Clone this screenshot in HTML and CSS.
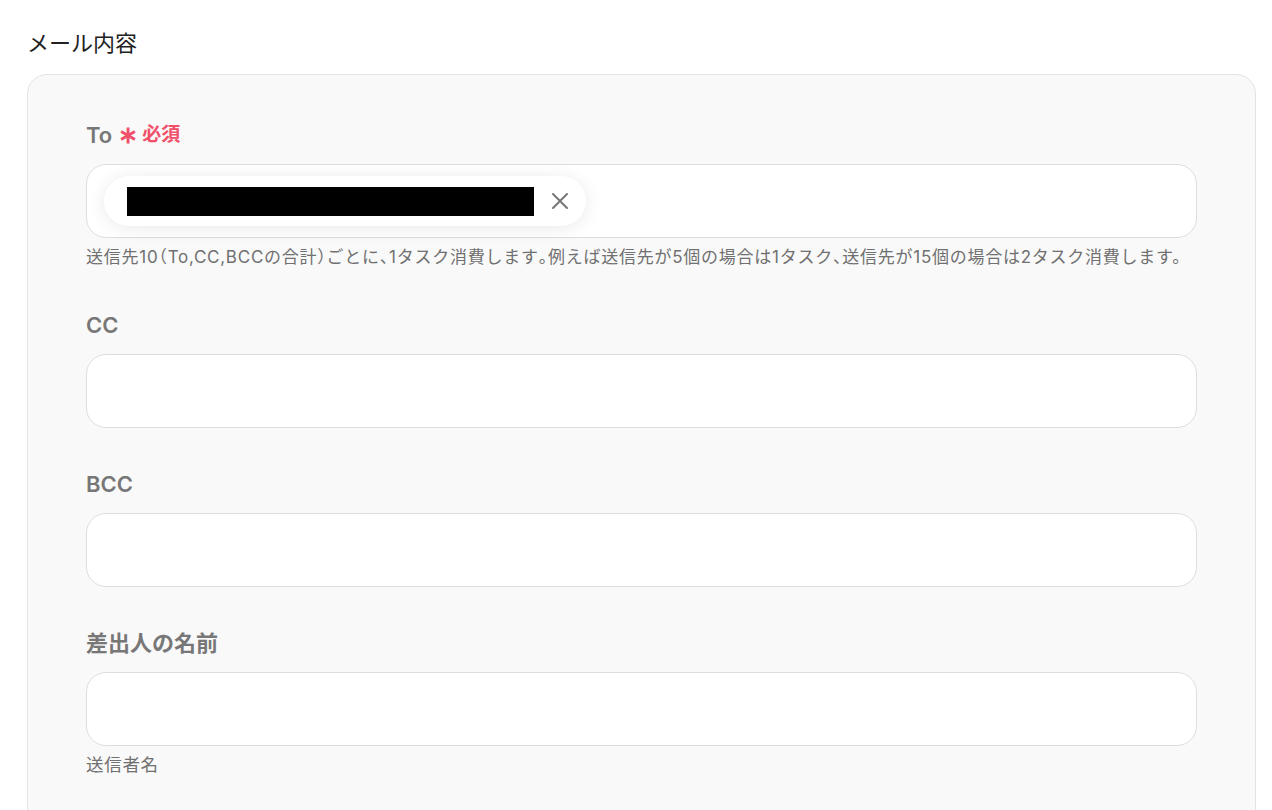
FILE: index.html
```html
<!DOCTYPE html>
<html lang="ja">
<head>
  <meta charset="UTF-8" />
  <title>メール内容</title>
  <link rel="stylesheet" href="styles.css">
</head>
<body>

  <!-- Section title -->
  <h2 class="section-title">メール内容</h2>

  <div class="card">
    <!-- To -->
    <div class="field">
      <div class="field-label">To <span class="required"><span class="star">∗</span>必須</span></div>
      <div class="input chips">
        <div class="chip">
          <span class="chip-mask"></span>
          <svg class="chip-close" viewBox="0 0 20 20" width="20" height="20">
            <path d="M3 3 L17 17 M17 3 L3 17" stroke="#777" stroke-width="2" stroke-linecap="round" fill="none"/>
          </svg>
        </div>
      </div>
      <div class="help nowrap">送信先10<span class="narrow">（</span>To,CC,BCCの合計<span class="narrow">）</span>ごとに<span class="narrow">、</span>1タスク消費します<span class="narrow">。</span>例えば送信先が5個の場合は1タスク<span class="narrow">、</span>送信先が15個の場合は2タスク消費します。</div>
    </div>

    <!-- CC -->
    <div class="field">
      <div class="field-label">CC</div>
      <div class="input"></div>
    </div>

    <!-- BCC -->
    <div class="field">
      <div class="field-label">BCC</div>
      <div class="input"></div>
    </div>

    <!-- Sender name -->
    <div class="field">
      <div class="field-label">差出人の名前</div>
      <div class="input"></div>
      <div class="help help-lg">送信者名</div>
    </div>
  </div>

</body>
</html>
```

FILE: styles.css
```css
* { box-sizing: border-box; }

body {
  margin: 0;
  padding: 0 16px 0 27px;
  background: #fff;
  font-family: 'Inter', 'Noto Sans CJK JP', sans-serif;
  color: #222;
}

.section-title {
  font-size: 22px;
  font-weight: 400;
  line-height: 30px;
  margin: 28px 0 16px;
  color: #222;
}

.card {
  background: #f9f9f9;
  border: 1px solid #e3e3e3;
  border-radius: 20px;
  padding: 46px 58px 40px 58px;
  display: flex;
  flex-direction: column;
  gap: 42px;
  min-height: 800px;
}

.field-label {
  font-size: 22px;
  font-weight: 600;
  line-height: 28px;
  color: #777;
  margin-bottom: 15px;
  display: flex;
  align-items: center;
  gap: 6px;
}

.required {
  color: #f0506a;
  font-size: 19px;
  font-weight: 600;
  display: flex;
  align-items: center;
  gap: 4px;
}

.required .star {
  font-size: 24px;
  font-weight: 700;
  line-height: 1;
}

.input {
  height: 74px;
  background: #fff;
  border: 1px solid #dedee2;
  border-radius: 20px;
}

.chips {
  display: flex;
  align-items: flex-start;
  padding: 11px 17px;
}

.chip {
  height: 50px;
  background: #fff;
  border-radius: 25px;
  box-shadow: 0 2px 18px rgba(0, 0, 0, 0.09);
  display: flex;
  align-items: center;
  padding: 0 16px 0 23px;
  gap: 16px;
}

.chip-mask {
  display: block;
  width: 407px;
  height: 29px;
  background: #000;
}

.chip-close { display: block; }

.help {
  margin-top: 7px;
  font-size: 17px;
  line-height: 24px;
  letter-spacing: 0.75px;
  color: #707070;
}

.help.nowrap { white-space: nowrap; }

.help .narrow {
  font-feature-settings: "halt";
}

.help-lg {
  font-size: 17.5px;
  letter-spacing: 0.7px;
}
```
